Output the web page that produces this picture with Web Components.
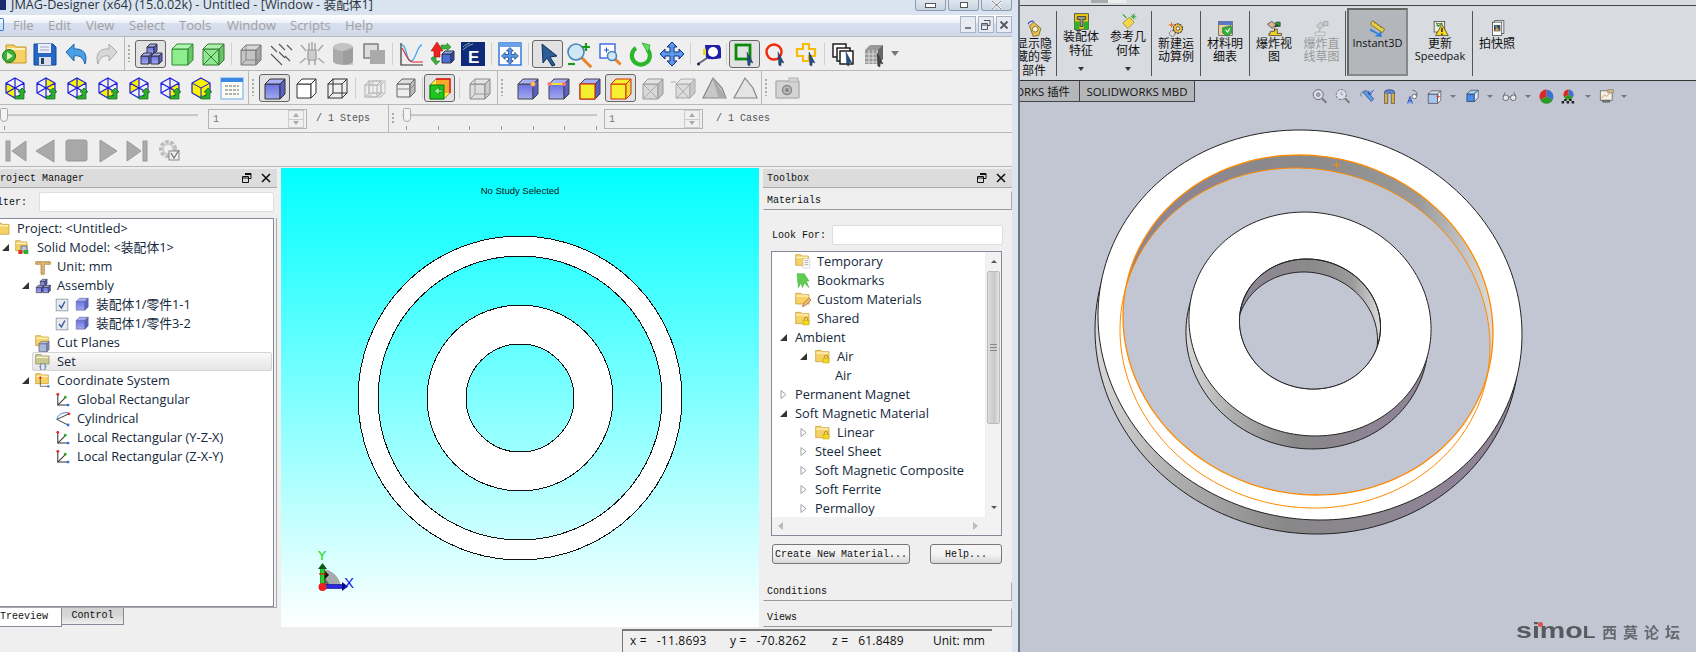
<!DOCTYPE html>
<html>
<head>
<meta charset="utf-8">
<style>
  html, body { margin: 0; padding: 0; width: 1696px; height: 652px; overflow: hidden; background: #c1c6d2; }
  body { display: flex; font-family: "Open Sans", "Noto Sans CJK SC", sans-serif; }
</style>
</head>
<body>
<jmag-window></jmag-window>
<sw-window></sw-window>

<script>
// ---------- icon drawing helpers (24x24 box) ----------
const box = (x, y, s, d, f, t, r, st = '#334', sw = 1) =>
  `<g stroke="${st}" stroke-width="${sw}" stroke-linejoin="round"><rect x="${x}" y="${y}" width="${s}" height="${s}" fill="${f}"/>` +
  `<path d="M${x} ${y}l${d} ${-d}h${s}l${-d} ${d}z" fill="${t}"/>` +
  `<path d="M${x + s} ${y}l${d} ${-d}v${s}l${-d} ${d}z" fill="${r}"/></g>`;
const wire = (x, y, s, d, st, sw = 1) =>
  `<g fill="none" stroke="${st}" stroke-width="${sw}"><rect x="${x}" y="${y}" width="${s}" height="${s}"/><rect x="${x + d}" y="${y - d}" width="${s}" height="${s}"/>` +
  `<path d="M${x} ${y}l${d} ${-d}M${x + s} ${y}l${d} ${-d}M${x} ${y + s}l${d} ${-d}M${x + s} ${y + s}l${d} ${-d}"/></g>`;
const folder = (x = 2, y = 4, w = 20, h = 16, c = '#f6d264', e = '#c2962c') =>
  `<path d="M${x} ${y}h${w * .4}l2 2h${w * .6 - 2}v${h - 2}h${-w}z" fill="${c}" stroke="${e}"/>` +
  `<path d="M${x + 1} ${y + 4}h${w - 2}" stroke="#fff3c4" stroke-width="2"/>`;
const lock = (x, y) =>
  `<path d="M${x + 2} ${y + 4}v-2a2.5 2.5 0 0 1 5 0v2" fill="none" stroke="#a88a20" stroke-width="1.3"/><rect x="${x}" y="${y + 4}" width="9" height="7" fill="#f4d81c" stroke="#b89a10" stroke-width=".7"/>`;
const cursor = (x = 14, y = 10, c = '#1f4e86') =>
  `<path d="M${x} ${y}l6 11-2.6-1-.6 4-2-1z" fill="${c}" stroke="#123" stroke-width=".4"/>`;
const hex = 'M12 2 21 7V17L12 22 3 17V7Z';
const greenArrow = '<path d="M13 21h5v-4h-2l4-4 4 4h-2v7h-9z" fill="#2dae2d" stroke="#0d6a14" stroke-width=".7" transform="translate(-1 -1)"/>';
const viewCube = p =>
  `${p ? `<path d="${p}" fill="#fbf300"/>` : ''}<path d="${hex}M3 7 12 12 21 7M12 12V22M12 2V12M3 17 12 12 21 17" fill="none" stroke="#1c1ce0" stroke-width="1.2"/>${greenArrow}`;
const magnifier = (x, y, r = 6) =>
  `<line x1="${x + r * .7}" y1="${y + r * .7}" x2="${x + r * 1.9}" y2="${y + r * 1.9}" stroke="#e8842c" stroke-width="3"/>` +
  `<circle cx="${x}" cy="${y}" r="${r}" fill="#cfe7f7" stroke="#4c86b4" stroke-width="1.6"/>`;
const coord = '<path d="M3 2V14H13" fill="none" stroke="#333" stroke-width="1.1"/><path d="M3 14 11 6" stroke="#333" stroke-width="1.1"/><circle cx="3" cy="2.5" r="1.5" fill="#e22"/><circle cx="11" cy="5.5" r="1.5" fill="#3a3"/><circle cx="14" cy="14" r="1.5" fill="#27d"/>';
const blueF = 'url(#b)';
const panPath = '<path d="M12 0l5 5h-3v5h5V7l5 5-5 5v-3h-5v5h3l-5 5-5-5h3v-5H5v3l-5-5 5-5v3h5V5H7z" fill="#5a9ae8" stroke="#0e2e88"/>';

const ICONS = {
  open: folder(4, 3, 20, 18) + '<circle cx="7" cy="14" r="6.5" fill="#3eae35" stroke="#1a7a1a"/><path d="M5 10l6 4-6 4z" fill="#d8f4c0"/>',
  save: '<path d="M1 2h19l3 3v18H1z" fill="#2467c4" stroke="#134a96"/><rect x="5" y="2" width="13" height="9" fill="#eef"/><path d="M7 5h9M7 8h9" stroke="#9ab"/><rect x="6" y="15" width="12" height="8" fill="#dde"/><rect x="8" y="16" width="3" height="6" fill="#245"/>',
  undo: '<path d="M2 10 10 2V7C20 6 24 13 21 22 19 15 15 13 10 14V19Z" fill="#4a9ee4" stroke="#1c62ac"/>',
  redo: '<path d="M22 10 14 2V7C4 6 0 13 3 22 5 15 9 13 14 14V19Z" fill="#d8d8d8" stroke="#aaa"/>',
  assembly: box(8, 5, 7, 3, blueF, '#a8aef0', '#5a62c0') + box(2, 14, 8, 3, blueF, '#a8aef0', '#5a62c0') + box(12, 14, 8, 3, blueF, '#a8aef0', '#5a62c0'),
  greenCube: box(2, 7, 16, 5, '#8eee8e', '#b2f4b2', '#68c868', '#2e8a2e'),
  greenWire: box(2, 7, 16, 5, '#90e890', '#b2f0b2', '#6cc06c', '#2e7a2e') + '<path d="M2 7l16 16M18 7 2 23" stroke="#2e7a2e"/>',
  grayWire: box(3, 8, 15, 5, '#c4c4c4', '#d8d8d8', '#a4a4a4', '#777') + '<path d="M8 3v15h15M8 18l-5 5" stroke="#888" fill="none"/>',
  arrows: '<g stroke="#555" stroke-width="1.1" fill="#555"><path d="M2 4l6 6M10 2l6 6M18 3l5 5M2 12l6 6M10 10l6 6M16 14l5 5M8 18l5 5"/></g>',
  field: '<g stroke="#aaa" stroke-width="1.6" fill="none"><path d="M8 8h8v10H8z" fill="#ccc"/><path d="M9 8V1M12 8V0M15 8V1M6 9 1 3M18 9 23 3M6 16 0 21M18 16 24 21M9 18v5M15 18v5"/></g>',
  cylinder: '<path d="M2 5v14c0 5 20 5 20 0V5z" fill="#aaa"/><ellipse cx="12" cy="5" rx="10" ry="4" fill="#c4c4c4"/><path d="M12 9v14h10V5z" fill="#888" opacity=".35"/>',
  squares: '<rect x="2" y="2" width="14" height="14" fill="#ddd" stroke="#777" stroke-width="1.4"/><rect x="8" y="8" width="15" height="14" fill="#aaa"/>',
  graph: '<path d="M2 1V23H24" fill="none" stroke="#333" stroke-width="1.2"/><path d="M3 3C8 3 7 19 12 19S18 3 23 3" fill="none" stroke="#49a8ec" stroke-width="1.3"/><path d="M3 6C8 14 9 20 14 20h10" fill="none" stroke="#d22" stroke-width="1.1"/>',
  chart: '<path d="M7 0 13 9H10V15H4V9H1Z" fill="#e22" stroke="#a11" stroke-width=".6"/>' + box(12, 12, 9, 3, '#4a70d8', '#8aa4ee', '#2a4ab0') + '<path d="M11 3h6v-2l4 4-4 4V7h-6zM2 15h4v4h4l-4 4-5-6z" fill="#3cae3c" stroke="#1a7a1a" stroke-width=".5"/>',
  e: '<rect width="24" height="24" fill="#0f2a78"/><path d="M2 8C5 5 8 3 12 2M2 5C4 3 6 2 9 1" stroke="#8aa" fill="none"/><text x="7" y="21" font-family="Liberation Sans,sans-serif" font-weight="700" font-size="17" fill="#fff">E</text>',
  viewport: `<rect x="1" y="1" width="22" height="22" fill="#fff" stroke="#2a6ee0" stroke-width="1.4"/><rect x="1" y="1" width="22" height="4" fill="#6aa2ea"/><g transform="translate(3.5 5.500) scale(.7)">${panPath}</g>`,
  pointer: '<path d="M6 2 21 14 14 15 19 23 16 24 11 16 7 21Z" fill="#2c5d94" stroke="#0f2e5c"/>',
  zoomPM: magnifier(9, 10, 8) + '<path d="M19 1v8M15 5h8" stroke="#1c9a1c" stroke-width="2.2"/><path d="M1 22h7" stroke="#1c9a1c" stroke-width="2.2"/>',
  zoomBox: '<rect x="2" y="2" width="15" height="14" fill="#fff" stroke="#1a4ee0" stroke-width="1.2"/><path d="M6 8h5M8.500 5.500v5" stroke="#1a4ee0"/>' + magnifier(14, 14, 4.5),
  rotate: '<path d="M7 6A9 9 0 1 0 18 7" fill="none" stroke="#2ab82a" stroke-width="4.200"/><path d="M13 1l8 2-2 8z" fill="#5ce05c" stroke="#1a8a1a" stroke-width=".6"/>',
  pan: panPath,
  tape: '<path d="M8 3h13c2 0 3 2 3 5v8c-2 1-13 2-15 0z" fill="#1f1fa8"/><circle cx="16" cy="10" r="5" fill="#fff"/><rect x="6" y="7" width="3" height="6" fill="#e8d820"/><path d="M10 16 1 22" stroke="#667" stroke-width="2"/><circle cx="1.500" cy="22" r="1.500" fill="#225"/>',
  selSquare: '<rect x="3" y="3" width="14" height="14" fill="none" stroke="#0a8a0a" stroke-width="2.800"/>' + cursor(),
  selCircle: '<circle cx="10" cy="10" r="7.500" fill="none" stroke="#f02a0a" stroke-width="2.400"/>' + cursor(),
  selPlus: '<path d="M8 2h6v5h6v7h-6v5H8v-5H2V7h6z" fill="none" stroke="#f6bc0a" stroke-width="2.200"/>' + cursor(),
  layers: '<rect x="2" y="2" width="13" height="13" fill="#fff" stroke="#111" stroke-width="1.400"/><rect x="6" y="6" width="13" height="13" fill="#fff" stroke="#111" stroke-width="1.400"/><rect x="9" y="9" width="13" height="13" fill="#fff" stroke="#111" stroke-width="1.400"/>' + cursor(15, 10),
  mesh: '<path d="M3 8l5-5h13v14l-5 5H3z" fill="#999"/><path d="M3 12h13M3 16h13M3 20h13M7 8v14M11 8v14M15 8v14" stroke="#ddd"/><path d="M16 8l5-5v14l-5 5z" fill="#666"/>' + cursor(15, 11, '#444'),
  v1: viewCube('M3 7 12 12V22L3 17Z'),
  v2: viewCube('M12 2 21 7V17L12 12Z'),
  v3: viewCube('M3 7 12 2 21 7 12 12Z'),
  v4: viewCube('M3 17 12 12 21 17 12 22Z'),
  v5: viewCube('M3 7 12 2V12L3 17Z'),
  v6: viewCube('M12 12 21 7V17L12 22Z'),
  v7: `<path d="${hex}" fill="#fbf300" stroke="#1c1ce0" stroke-width="1.200"/><path d="M3 7 12 12 21 7M12 12V22" stroke="#1c1ce0" fill="none"/>${greenArrow}`,
  table: '<rect x="1" y="2" width="22" height="21" fill="#fbfbf4" stroke="#8ec0f0" stroke-width="1.400"/><rect x="1" y="2" width="22" height="4" fill="#3a8ae4"/><path d="M5 10h14M5 14h14M5 18h14" stroke="#999" stroke-width="1.500" stroke-dasharray="3 1"/>',
  solid: box(2, 8, 15, 5, blueF, '#aab0f4', '#5860c4', '#333'),
  wireOut: box(3, 8, 14, 5, '#fff', '#fff', '#fff', '#333'),
  wireAll: wire(3, 8, 14, 5, '#333'),
  ghost: '<g opacity=".55">' + wire(3, 9, 12, 4, '#777') + wire(7, 9, 12, 4, '#999') + '</g>',
  ghostBox: box(4, 8, 13, 5, '#eee', '#ddd', '#bbb', '#666') + '<path d="M4 13h13l5-5" stroke="#888" fill="none"/>',
  pickFace: '<path d="M8 3H22V17L16 23H2V9Z" fill="#fdf030" stroke="#888"/><path d="M8 3H22V17H8Z" fill="#f22" opacity=".35"/><path d="M2 9H16V23H2Z" fill="#1fc41f" stroke="#0a7a0a"/><path d="M8 3H22V17" fill="none" stroke="#e01010" stroke-width="1.300"/><path d="M15 14h-4v-3l-5 4 5 4v-3h4z" fill="#8ff08f" stroke="#0a7a0a" stroke-width=".6"/>',
  grayWire2: box(3, 8, 15, 5, '#ddd', '#e4e4e4', '#ccc', '#888') + '<path d="M8 3v15h15M8 18l-5 5" stroke="#999" fill="none"/>',
  cubeV: box(2, 8, 15, 5, blueF, '#aab0f4', '#5860c4', '#444') + '<circle cx="17" cy="8" r="2.200" fill="#f4e030" stroke="#e88"/>',
  cubeE: box(2, 8, 15, 5, blueF, '#aab0f4', '#5860c4', '#444') + '<path d="M3 8h14" stroke="#f4e030" stroke-width="2"/><circle cx="2.500" cy="8" r="2" fill="#f77"/><circle cx="17" cy="8" r="2" fill="#f77"/>',
  cubeF: box(2, 8, 15, 5, blueF, '#aab0f4', '#5860c4', '#444') + '<rect x="2" y="8" width="15" height="15" fill="#f4ee30" stroke="#d82a0a" stroke-width="1.200"/>',
  cubeY: box(2, 8, 15, 5, '#f6f030', '#f6f030', '#e8e030', '#d82a0a'),
  grayX: box(3, 8, 15, 5, '#d8d8d8', '#e2e2e2', '#c0c0c0', '#999') + '<path d="M3 8l15 15M18 8 3 23" stroke="#aaa"/>',
  grayX2: box(5, 8, 14, 5, '#dcdcdc', '#e6e6e6', '#c8c8c8', '#aaa') + '<path d="M5 8l14 15M19 8 5 23M0 6h5" stroke="#aaa"/>',
  prism: '<path d="M11 2 1 22H24L20 12Z" fill="#c8c8c8" stroke="#888" stroke-width="1.200"/><path d="M11 2 17 22" stroke="#aaa"/><path d="M11 2 24 22H17Z" fill="#aaa"/>',
  prism2: '<path d="M12 2 1 22H24L20 12Z" fill="#e4e4e4" stroke="#888" stroke-width="1.200"/><path d="M12 2 20 12" stroke="#999"/>',
  camera: '<rect x="1" y="5" width="23" height="17" rx="1" fill="#d4d4d4" stroke="#b4b4b4" stroke-width="1.600"/><rect x="14" y="2" width="9" height="4" fill="#d4d4d4" stroke="#b4b4b4"/><circle cx="12" cy="14" r="4.500" fill="#bbb" stroke="#888" stroke-width="1.400"/><circle cx="12" cy="14" r="2" fill="#888"/>',
  first: '<rect x="4" y="3" width="4" height="20" fill="#aaa" stroke="#999"/><path d="M10 13 24 3V23Z" fill="#aaa" stroke="#999"/>',
  prev: '<path d="M3 13 21 2V24Z" fill="#aaa" stroke="#999"/>',
  stop: '<rect x="2" y="2" width="21" height="21" rx="2" fill="#a8a8a8" stroke="#999"/>',
  play: '<path d="M5 2 22 13 5 24Z" fill="#aaa" stroke="#999"/>',
  last: '<rect x="17" y="3" width="4" height="20" fill="#aaa" stroke="#999"/><path d="M1 3 15 13 1 23Z" fill="#aaa" stroke="#999"/>',
  gear: '<circle cx="11" cy="11" r="7" fill="none" stroke="#bbb" stroke-width="4" stroke-dasharray="3.500 1.500"/><circle cx="11" cy="11" r="5" fill="none" stroke="#ccc" stroke-width="2"/><rect x="12" y="13" width="10" height="9" fill="#eee" stroke="#888"/><path d="M14 15l3 5 5-8" fill="none" stroke="#777" stroke-width="1.300"/>',
  // tree
  tFolder: folder(1, 3, 20, 17),
  tSolid: folder(1, 1, 17, 15) + '<rect x="9" y="9" width="9" height="9" fill="#b8c8d8" stroke="#445"/><rect x="5" y="15" width="6" height="6" fill="#d32"/><rect x="13" y="15" width="7" height="6" fill="#3a3"/>',
  tRuler: '<path d="M1 4H23V8H14V23H9V8H1Z" fill="#e0b878" stroke="#a87a34"/><path d="M4 4v2M8 4v2M16 4v2M20 4v2M9 12h2M9 16h2M9 20h2" stroke="#a87a34"/>',
  tCheck: '<rect x="2" y="2" width="20" height="20" fill="#e8eaf0" stroke="#8f9aa8" stroke-width="1.500"/><path d="M7 12 11 17 17 6" fill="none" stroke="#3c5a9c" stroke-width="2.400"/>',
  tCube: box(2, 7, 14, 5, blueF, '#a8aef0', '#5a62c0', '#5560a0'),
  tCut: folder(1, 1, 19, 15) + box(6, 13, 12, 3, '#a8b8d8', '#c8d4e8', '#8898b8', '#557'),
  tSet: folder(1, 1, 20, 14, '#c8c890', '#8a8a50') + '<text x="5" y="23" font-family="DejaVu Sans Mono,monospace" font-size="11" fill="#1a5ab0">{}</text>',
  tCoordF: folder(1, 1, 19, 15) + '<path d="M8 7V20H20" fill="none" stroke="#333"/><circle cx="8" cy="7" r="1.800" fill="#e22"/><circle cx="20" cy="20" r="1.800" fill="#27d"/>',
  tCoord: '<g transform="scale(1.400)">' + coord + '</g>',
  tCyl: '<g transform="scale(1.400)"><path d="M15 3 2 9 14 15" fill="none" stroke="#333"/><path d="M2 9C3 4 8 1 14 2" fill="none" stroke="#27d"/><circle cx="15" cy="3" r="1.500" fill="#e22"/><circle cx="14" cy="15" r="1.500" fill="#27d"/></g>',
  tTemp: folder(1, 1, 19, 16) + '<rect x="12" y="7" width="10" height="14" fill="#fff" stroke="#999" stroke-dasharray="1 1"/><path d="M14 10h6M14 13h6M14 16h6" stroke="#888"/>',
  tMark: '<path d="M3 1 14 1 21 12 17 12 21 22 14 15 11 22 9 15 5 22Z" fill="#5ece4e" stroke="#2a9a2a" stroke-width=".6"/>',
  tPencil: folder(1, 2, 20, 16) + '<path d="M11 22l2-5 8-8 3 3-8 8z" fill="#f0b878" stroke="#a86020"/>',
  tLock: folder(1, 2, 20, 17) + lock(12, 10),
  // solidworks ribbon
  sHide: '<path d="M5 8l6-5 10 9-3 10-8 1z" fill="#e8c050" stroke="#665010"/><circle cx="13" cy="13" r="4" fill="#fff6c8" stroke="#553"/><path d="M3 6c1-4 5-5 8-4" stroke="#2a4ad0" fill="none" stroke-width="1.500"/>',
  sFeature: '<rect x="2" y="1" width="20" height="22" fill="#e8c818" stroke="#333"/><rect x="2" y="12" width="7" height="11" fill="#2fb02f"/><rect x="15" y="12" width="7" height="11" fill="#2fb02f"/><path d="M6 5h12v4h-4v10h-4V9H6z" fill="#999" stroke="#222"/>',
  sRef: '<path d="M4 14 13 6 20 13 11 22Z" fill="#f0d850" stroke="#998010"/><path d="M4 2l5 5" stroke="#2aa02a" stroke-width="1.500"/><path d="M19 1v8M15 5h8M16 2l6 6M22 2l-6 6" stroke="#2aa02a"/>',
  sMotion: '<circle cx="14" cy="12" r="6.500" fill="#f0c040" stroke="#333" stroke-dasharray="3 1" stroke-width="1.500"/><circle cx="14" cy="12" r="2.500" fill="#fff" stroke="#333"/><circle cx="6" cy="19" r="4" fill="#ddd" stroke="#333" stroke-dasharray="2 1"/><path d="M5 2l1 4 4 1-4 1-1 4-1-4-4-1 4-1z" fill="#e86a1a"/>',
  sBom: '<rect x="2" y="2" width="20" height="20" fill="#e8d090" stroke="#555"/><rect x="2" y="2" width="20" height="5" fill="#5a76c8"/><path d="M8 11 20 8 21 18 14 23 8 18z" fill="#3ab03a" stroke="#175"/><path d="M12 14l3 3 3-5" stroke="#fff" fill="none" stroke-width="1.500"/>',
  sExplode: '<path d="M2 6 8 2 14 6 9 12Z" fill="#d8b890" stroke="#333"/><path d="M14 3h6v6h-6z" fill="#2aa02a" stroke="#333"/><path d="M12 12v4M12 10l5-3" stroke="#222" stroke-width="1.500"/><path d="M6 16h6v-3h4v6h6v3H4v-3h2z" fill="#f0d020" stroke="#333"/>',
  sExplodeG: '<path d="M5 8 11 3 15 8 10 13Z" fill="#ccc" stroke="#999"/><path d="M15 2h6v6h-6z" fill="#ccc" stroke="#999"/><path d="M10 13l-2 5" stroke="#aaa" stroke-width="1.500"/><path d="M3 17h14v5H3z" fill="#ddd" stroke="#aaa"/>',
  s3d: '<path d="M5 1 22 13 19 18 2 6Z" fill="#e8d040" stroke="#665810"/><path d="M8 5l1-2M12 8l1-2M16 11l1-2" stroke="#554"/><path d="M2 12 14 19 17 15 18 24 8 23 12 20 1 15Z" fill="#2a7ee0"/>',
  sUpdate: '<rect x="3" y="2" width="15" height="15" fill="#f4f0e0" stroke="#333"/><path d="M6 5h9M6 8h5" stroke="#555"/><path d="M6 4l3 5 5-5" stroke="#2aa02a" fill="none" stroke-width="1.500"/><path d="M14 6 23 22H5Z" fill="#f8d820" stroke="#333"/><path d="M14 11v6M14 19v2" stroke="#222" stroke-width="2"/>',
  sSnap: '<rect x="8" y="1" width="13" height="18" fill="#fff" stroke="#333"/><rect x="5" y="3" width="13" height="19" fill="#fff" stroke="#333"/><rect x="7" y="7" width="9" height="9" fill="#3a4a6a"/><path d="M8 15l3-5 4 5z" fill="#e8a030"/><circle cx="10" cy="9" r="1.200" fill="#5bc85b"/>',
  // solidworks heads-up bar
  hZoom: '<circle cx="10" cy="9" r="8" fill="#dde" stroke="#666" stroke-width="1.500"/><circle cx="10" cy="9" r="3" fill="#aab" stroke="#666"/><path d="M16 15l7 7" stroke="#777" stroke-width="3"/>',
  hZoomA: '<circle cx="10" cy="9" r="8" fill="#dde" stroke="#666" stroke-width="1.500" stroke-dasharray="4 2"/><path d="M10 5v4h3" stroke="#666" fill="none"/><path d="M16 15l7 7" stroke="#777" stroke-width="3"/>',
  hPrev: '<path d="M5 6 18 20 22 16 10 2Z" fill="#5a9ae4" stroke="#2a4a80"/><path d="M2 12c-2-5 1-8 6-9" stroke="#2a4a80" fill="none"/><path d="M14 8 22 2M14 8h5M14 8v-5" stroke="#1a3ac0" fill="none" stroke-width="1.400"/>',
  hSection: '<path d="M4 5c0-5 16-5 16 0v18h-5V8c0-2-6-2-6 0v15H4z" fill="#5a8ae0" stroke="#224"/><path d="M4 6v17h5V8zM15 6v17h5V8z" fill="#d8b040" stroke="#665" stroke-width=".8"/>',
  hOrient: '<path d="M12 2c5 0 8 4 7 8l-3-1" fill="none" stroke="#333"/><circle cx="15" cy="12" r="3.500" fill="#fff" stroke="#333"/><path d="M4 23 8 12 12 23M5.500 19h5" fill="#8aa8e8" stroke="#2a4ac0" stroke-width="1.400"/>',
  hView: box(2, 8, 15, 5, '#a8c4ec', '#d4e2f4', '#fff', '#333') + '<path d="M15 12h6M18 9v6" stroke="#d22"/>',
  hDisplay: box(3, 8, 12, 6, '#4a8ae8', '#a4ccf4', '#dceafa', '#234'),
  hGlasses: '<circle cx="6" cy="14" r="4.500" fill="#e8e8f0" stroke="#555" stroke-width="1.300"/><circle cx="18" cy="14" r="4.500" fill="#e8e8f0" stroke="#555" stroke-width="1.300"/><path d="M10 13c1-1 3-1 4 0M2 12 5 5M22 12 19 5" stroke="#555" fill="none"/>',
  hBall: '<circle cx="12" cy="12" r="11" fill="#e8c020"/><path d="M12 12V1A11 11 0 0 0 2 17Z" fill="#d82a2a"/><path d="M12 12 2 17A11 11 0 0 0 22 17Z" fill="#2a9a2a"/><path d="M12 12 22 17A11 11 0 0 0 23 12 11 11 0 0 0 12 1Z" fill="#3a70d8"/>',
  hScene: '<circle cx="12" cy="9" r="8" fill="#e8c020"/><path d="M12 9V1A8 8 0 0 0 5 13Z" fill="#d82a2a"/><path d="M12 9 5 13A8 8 0 0 0 19 13Z" fill="#2a9a2a"/><path d="M12 9 19 13A8 8 0 0 0 12 1Z" fill="#3a70d8"/><path d="M1 19h4v4H1zM9 19h4v4H9zM17 19h4v4h-4zM5 16h4v3H5zM13 16h4v3h-4z" fill="#222"/>',
  hDisplay2: '<rect x="2" y="3" width="19" height="15" fill="#f4f0e4" stroke="#444"/><path d="M4 15 9 9l3 3 5-5" stroke="#c06a30" fill="none"/><path d="M6 18h11v3H6z" fill="#888" stroke="#444"/><path d="M14 1h9v5h-9z" fill="#d8b890" stroke="#875"/>'
};
const DEFS = '<defs><linearGradient id="b" x1="0" y1="0" x2="0" y2="1"><stop offset="0" stop-color="#6a72e0"/><stop offset="1" stop-color="#a4a8f0"/></linearGradient></defs>';

// ---------- base class ----------
class Comp extends HTMLElement {
  connectedCallback() {
    if (this.shadowRoot) return;
    this.attachShadow({ mode: 'open' });
    this.shadowRoot.innerHTML = `<style>${this.css()}</style>${this.html()}`;
  }
  css() { return ':host{display:block}'; }
  html() { return '<slot></slot>'; }
  at(n, d = '') { return this.hasAttribute(n) ? this.getAttribute(n) : d; }
}
const def = (tag, css, html) => customElements.define(tag, class extends Comp {
  css() { return css; }
  html() { return html(this); }
});

const MONO = '"Liberation Mono", monospace';
const UI = '"Open Sans", "Noto Sans CJK SC", sans-serif';

def('x-icon', ':host{display:inline-flex;flex:none}svg{display:block;overflow:visible}', e => {
  const s = e.at('size', 24);
  return `<svg width="${s}" height="${s}" viewBox="0 0 24 24">${DEFS}${ICONS[e.at('name')] || ''}</svg>`;
});

// toolbars
def('tool-row', `:host{display:flex;align-items:stretch;height:33px;border-bottom:1px solid #b8b8b8;box-sizing:content-box;overflow:hidden}`, () => '<slot></slot>');
def('tool-btn', `:host{display:flex;flex:none;width:31px;align-items:center;justify-content:center;box-sizing:border-box;margin:3px 0 2px}
  :host([on]){background:#e2e2e2;border:1px solid #666;border-radius:3px}`, e => `<x-icon name="${e.at('name')}"></x-icon>`);
def('tool-sep', `:host{display:flex;flex:none;justify-content:center;margin:6px 0 5px}i{width:1px;background:#d0d0d0}`,
  e => { e.style.width = e.at('w', 6) + 'px'; return '<i></i>'; });
def('tool-section', `:host{display:flex;flex:none;gap:3px}
  .l{width:1px;background:#b8b8b8}
  .g{width:2px;margin:8px 0;background:repeating-linear-gradient(#aaa 0 2px,transparent 2px 4px)}`,
  e => { e.style.width = e.at('w', 13) + 'px'; return '<div class="l" style="margin-left:' + e.at('l', 2) + 'px"></div><div class="g"></div>'; });

def('step-slider', `:host{display:block;flex:none;height:27px;position:relative}
  .t{height:2px;margin-top:9px;background:#c8c8c8;border-bottom:1px solid #e8e8e8}
  .k{position:absolute;top:3px;left:var(--k,0);width:8px;height:14px;background:#f4f4f4;border:1px solid #aaa;border-radius:2px 2px 5px 5px;box-sizing:border-box}
  .m{display:flex;justify-content:space-between;padding:9px 0 0;margin:0 var(--m,0) 0 var(--k2,4px)}
  .m i{width:1px;height:4px;background:#999}`,
  e => `<div class="t"></div><div class="k"></div><div class="m">${'<i></i>'.repeat(+e.at('ticks', 1))}${+e.at('ticks', 1) === 1 ? '<span></span>' : ''}</div>`);

def('spin-box', `:host{display:flex;flex:none;box-sizing:border-box;width:99px;height:20px;margin-top:4px;border:1px solid #b4b4b4;background:#f0f0f0;font:10px ${MONO};color:#777;align-items:center;padding-left:4px;justify-content:space-between}
  .a{display:flex;flex-direction:column;width:14px;height:16px;margin-right:2px;border:1px solid #ccc;font-size:0}
  .a i{flex:1;display:flex;align-items:center;justify-content:center}
  .a i:after{content:"";border:3px solid transparent}
  .a i:first-child:after{border-bottom:4px solid #aaa;border-top:0}
  .a i:last-child{border-top:1px solid #ccc}
  .a i:last-child:after{border-top:4px solid #aaa;border-bottom:0}`, () => '<span><slot></slot></span><div class="a"><i></i><i></i></div>');

// tree
def('tree-row', `:host{display:flex;align-items:center;height:19px;white-space:nowrap;font:12.800px/19px ${UI};color:#14283c;box-sizing:border-box}
  :host([sel]){background:linear-gradient(#fafafa,#e4e4e4);outline:1px solid #d4d4d4;outline-offset:-1px;border-radius:2px}
  .a{flex:none;display:flex;align-items:center;justify-content:center;width:var(--aw,20px)}
  .a svg{display:block}
  .i{flex:none;display:flex;align-items:center}`,
  e => {
    const ar = e.at('arrow');
    const mark = ar === 'o'
      ? '<svg width="7" height="7"><path d="M7 0V7H0Z" fill="#333"/></svg>'
      : ar === 'c' ? '<svg width="7" height="9"><path d="M1 .5 6 4.500 1 8.500Z" fill="#fff" stroke="#a0a0a0"/></svg>' : '';
    const icons = e.at('icons').split(',').filter(Boolean).map(s => {
      const [n, w = 22, sz = 16] = s.split(':');
      return `<span class="i" style="width:${w}px"><x-icon name="${n}" size="${sz}"></x-icon></span>`;
    }).join('');
    return `<span class="a" style="margin-left:${e.at('pad', 0)}px">${mark}</span>${icons}<span><slot></slot></span>`;
  });

// small panel pieces
def('panel-head', `:host{display:flex;align-items:center;justify-content:space-between;height:19px;box-sizing:border-box;background:#dcdcdc;border-bottom:1px solid #aaa;font:10px ${MONO};color:#111;padding:0 6px 0 4px;white-space:nowrap}
  .w{display:flex;gap:9px;align-items:center}`,
  () => `<span><slot></slot></span><span class="w"><svg width="10" height="10"><path d="M3 .5h6v5H7M.5 3.500h6v6h-6zM.5 5h6M3 1.500h6" fill="none" stroke="#111"/></svg><svg width="10" height="10"><path d="M1 1l8 8M9 1 1 9" stroke="#111" stroke-width="1.600"/></svg></span>`);
def('sect-bar', `:host{display:block;box-sizing:border-box;height:19px;background:#efefef;border:1px solid #eee;border-bottom:1px solid #999;border-right:1px solid #aaa;font:10px/17px ${MONO};color:#111;padding-left:3px}`, () => '<slot></slot>');
def('push-btn', `:host{display:flex;flex:none;box-sizing:border-box;height:20px;align-items:center;justify-content:center;border:1px solid #777;border-radius:3px;background:linear-gradient(#f4f4f4 50%,#d8d8d8);font:10px ${MONO};color:#111;white-space:nowrap}`, () => '<slot></slot>');
def('text-field', `:host{display:block;flex:none;box-sizing:border-box;height:20px;background:#fff;border:1px solid #ddd;border-radius:2px}`, () => '');

// viewport
def('model-view', `:host{display:flex;flex:1;align-items:center;justify-content:center;position:relative;background:linear-gradient(#00ffff,#fff);overflow:hidden;margin-top:1px}
  .cap{position:absolute;top:17px;left:0;right:0;text-align:center;font:9.500px/12px "Liberation Sans",sans-serif;color:#111}
  .axis{position:absolute;left:30px;bottom:28px}`,
  () => {
    const c = r => `M${162 - r} 162a${r} ${r} 0 1 0 ${2 * r} 0a${r} ${r} 0 1 0 ${-2 * r} 0z`;
    return `<div class="cap">No Study Selected</div>
    <svg width="324" height="324" viewBox="0 0 324 324" style="overflow:visible" shape-rendering="crispEdges">
      <path d="${c(162)}${c(142)}" fill="#fff" fill-rule="evenodd" stroke="#111"/>
      <path d="${c(93)}${c(54)}" fill="#fff" fill-rule="evenodd" stroke="#111"/>
    </svg>
    <svg class="axis" width="44" height="48" viewBox="0 0 44 48">
      <path d="M11 36 V18 A20 20 0 0 1 30 36Z" fill="#a6acac"/>
      <path d="M11 36 V22 L20 36Z" fill="#666"/>
      <path d="M14 20 18 24 12 30Z" fill="#111"/>
      <rect x="9.500" y="17" width="4" height="18" fill="#22d622" stroke="#0a600a" stroke-width=".6"/>
      <path d="M7 18 11.500 12 16 18Z" fill="#0a5a1a"/>
      <rect x="12" y="33.500" width="20" height="4" fill="#2a2ae0" stroke="#0a0a80" stroke-width=".6"/>
      <path d="M31 31 37 35.500 31 40Z" fill="#0a0a80"/>
      <circle cx="11.500" cy="36" r="4" fill="#ee2020"/>
      <path d="M8 23h7" stroke="#e00" stroke-width="1.100"/>
      <text x="6" y="9" font-family="Liberation Sans,sans-serif" font-size="15" fill="#1ce01c">Y</text>
      <text x="33" y="37" font-family="Liberation Sans,sans-serif" font-size="15" fill="#1414e8">X</text>
    </svg>`;
  });

// ---------- JMAG side ----------
def('project-panel', `:host{display:flex;flex:none;flex-direction:column;width:277px;overflow:hidden;margin-top:2px}
  .flt{display:flex;align-items:center;height:30px;flex:none;padding-bottom:2px;box-sizing:border-box;font:10px ${MONO};color:#111}
  .flt span{width:39px;margin-left:-15px;flex:none}
  text-field{width:235px;margin-left:15px}
  .out{flex:1;border:1px solid #aaa;border-left:0;border-top:0;padding-right:2px;display:flex;min-height:0}
  .tree{flex:1;box-sizing:border-box;background:#fff;border:1px solid #889;border-left:0;overflow:hidden}
  .tabs{display:flex;height:19px;flex:none;align-items:flex-start}
  .t1{width:62px;height:19px;box-sizing:border-box;background:#fff;border:1px solid #889;border-top:0;border-left:0;font:10px/18px ${MONO};color:#111}
  .t2{width:62px;height:17px;box-sizing:border-box;background:linear-gradient(#d4d4d4 40%,#efefef);border:1px solid #889;border-left:0;border-top:0;font:10px/15px ${MONO};color:#111;text-align:center}`,
  () => `
  <panel-head><span style="margin-left:-10px">Project Manager</span></panel-head>
  <div class="flt"><span>Filter:</span><text-field></text-field></div>
  <div class="out"><div class="tree" style="--aw:20px">
    <tree-row pad="-25" icons="tFolder">Project: &lt;Untitled&gt;</tree-row>
    <tree-row pad="-5" arrow="o" icons="tSolid">Solid Model: &lt;装配体1&gt;</tree-row>
    <tree-row pad="15" icons="tRuler">Unit: mm</tree-row>
    <tree-row pad="15" arrow="o" icons="assembly">Assembly</tree-row>
    <tree-row pad="35" icons="tCheck:20:14,tCube:21:15">装配体1/零件1-1</tree-row>
    <tree-row pad="35" icons="tCheck:20:14,tCube:21:15">装配体1/零件3-2</tree-row>
    <tree-row pad="15" icons="tCut">Cut Planes</tree-row>
    <tree-row pad="-17" icons="tSet" sel style="margin-left:32px;margin-right:1px">Set</tree-row>
    <tree-row pad="15" arrow="o" icons="tCoordF">Coordinate System</tree-row>
    <tree-row pad="35" icons="tCoord">Global Rectangular</tree-row>
    <tree-row pad="35" icons="tCyl">Cylindrical</tree-row>
    <tree-row pad="35" icons="tCoord">Local Rectangular (Y-Z-X)</tree-row>
    <tree-row pad="35" icons="tCoord">Local Rectangular (Z-X-Y)</tree-row>
  </div></div>
  <div class="tabs"><div class="t1">Treeview</div><div class="t2">Control</div></div>`);

def('scroll-v', `:host{display:flex;flex:none;flex-direction:column;align-items:center;width:15px;background:#f2f2f2;border-left:1px solid #eee;margin-left:auto}
  .u,.d{height:19px;display:flex;align-items:center;justify-content:center}
  .u:after{content:"";border:3px solid transparent;border-bottom:3px solid #555;border-top:0}
  .d:after{content:"";border:3px solid transparent;border-top:3px solid #555;border-bottom:0}
  .th{width:13px;height:153px;background:linear-gradient(90deg,#ddd,#c8c8c8 60%,#e4e4e4);border:1px solid #bbb;border-radius:2px;box-sizing:border-box;display:flex;align-items:center;justify-content:center}
  .th:after{content:"";width:7px;height:5px;border-top:1px solid #888;border-bottom:1px solid #888;background:linear-gradient(transparent 40%,#888 40% 60%,transparent 60%)}
  .sp{flex:1}`, () => '<div class="u"></div><div class="th"></div><div class="sp"></div><div class="d"></div>');

def('toolbox-panel', `:host{display:flex;flex:none;flex-direction:column;width:249px;overflow:hidden;margin-top:2px}
  sect-bar.m{margin-top:3px;margin-bottom:15px}
  .look{display:flex;align-items:center;font:10px ${MONO};color:#111;padding-left:9px;height:20px;flex:none}
  .look text-field{width:171px;margin-left:6px}
  .box{flex:none;margin:6px 10px 0 8px;height:285px;box-sizing:border-box;border:1px solid #889;background:#fff;display:flex;flex-direction:column}
  .top{display:flex;flex:1;min-height:0;overflow:hidden}
  .rows{flex:1;--aw:23px;overflow:hidden}
  .h{height:18px;flex:none;background:#f2f2f2;display:flex;align-items:center;justify-content:space-between;padding:0 23px 0 6px}
  .h i{border:4px solid transparent}
  .h i:first-child{border-right:5px solid #bbb;border-left:0}
  .h i:last-child{border-left:5px solid #bbb;border-right:0}
  .btns{display:flex;justify-content:space-between;margin:8px 10px 0 9px}
  .sp{flex:1}`,
  () => `
  <panel-head>Toolbox</panel-head>
  <sect-bar class="m">Materials</sect-bar>
  <div class="look"><span>Look For:</span><text-field></text-field></div>
  <div class="box"><div class="top"><div class="rows">
    <tree-row icons="tTemp">Temporary</tree-row>
    <tree-row icons="tMark">Bookmarks</tree-row>
    <tree-row icons="tPencil">Custom Materials</tree-row>
    <tree-row icons="tLock">Shared</tree-row>
    <tree-row arrow="o" icons="">Ambient</tree-row>
    <tree-row pad="20" arrow="o" icons="tLock">Air</tree-row>
    <tree-row pad="40" icons="">Air</tree-row>
    <tree-row arrow="c" icons="">Permanent Magnet</tree-row>
    <tree-row arrow="o" icons="">Soft Magnetic Material</tree-row>
    <tree-row pad="20" arrow="c" icons="tLock">Linear</tree-row>
    <tree-row pad="20" arrow="c" icons="">Steel Sheet</tree-row>
    <tree-row pad="20" arrow="c" icons="">Soft Magnetic Composite</tree-row>
    <tree-row pad="20" arrow="c" icons="">Soft Ferrite</tree-row>
    <tree-row pad="20" arrow="c" icons="">Permalloy</tree-row>
  </div><scroll-v></scroll-v></div><div class="h"><i></i><i></i></div></div>
  <div class="btns"><push-btn style="width:138px">Create New Material...</push-btn><push-btn style="width:72px">Help...</push-btn></div>
  <div class="sp"></div>
  <sect-bar style="margin-bottom:7px">Conditions</sect-bar>
  <sect-bar>Views</sect-bar>`);

def('status-line', `:host{display:flex;height:25px;flex:none;justify-content:flex-end;padding-top:2px;box-sizing:border-box;background:#efefef}
  .b{display:grid;grid-template-columns:100px 102px 101px 1fr;width:370px;box-sizing:border-box;border-top:2px solid #777;border-left:1px solid #777;padding-left:7px;font:12px/19px ${UI};color:#111;white-space:pre}
  .b span:not(:last-child){letter-spacing:.2px}
  .g{width:20px;flex:none}`,
  () => `<div class="b"><span>x =   -11.8693</span><span>y =   -70.8262</span><span>z =   61.8489</span><span>Unit: mm</span></div><div class="g"></div>`);

def('title-bar', `:host{display:flex;height:15px;flex:none;background:#d9e4f0;align-items:flex-start;justify-content:space-between;overflow:hidden;font:12.700px/8px ${UI};color:#2c3440;white-space:nowrap}
  .t{padding-left:11px}
  .app{position:absolute;left:-4px;top:0;width:10px;height:10px;background:#1a2a6a}
  .c{display:flex;gap:2px;padding-right:8px;margin-right:-2px}
  .c i{display:flex;align-items:center;justify-content:center;width:29px;height:10px;border:1px solid #8d9bac;border-top:0;border-radius:0 0 3px 3px;background:linear-gradient(#e0e6ee,#c8d4e2)}
  .c b{display:block;box-sizing:border-box;width:11px;height:5px;border:1px solid #555;background:#fff}`,
  () => `<div class="app"></div><div class="t">JMAG-Designer (x64) (15.0.02k) - Untitled - [Window - 装配体1]</div>
  <div class="c"><i><b></b></i><i><b style="width:8px;height:6px"></b></i><i><svg width="12" height="8"><path d="M1 0l9 8M10 0 1 8" stroke="#fff" stroke-width="2.400"/><path d="M1 0l9 8M10 0 1 8" stroke="#555" stroke-width=".8"/></svg></i></div>`);

def('menu-bar', `:host{display:flex;height:22px;flex:none;box-sizing:border-box;border-bottom:1px solid #b4b8c0;background:linear-gradient(#fff,#eef1f7 36%,#d8dfee 40%,#d2d9e9);font:13px/20px ${UI};color:#a0a0a0;position:relative}
  span{flex:none}
  .m{position:absolute;right:0;top:1px;display:flex;gap:2px}
  .m i{display:flex;align-items:center;justify-content:center;box-sizing:border-box;width:16px;height:17px;background:#e8ecf2;border:1px solid #a6b4c4}
  .ic{width:4px;height:13px;margin:3px 9px 0 0;border:1px solid #2a7ae0;border-left:0;border-radius:0 2px 2px 0;box-sizing:border-box}`,
  () => {
    const items = [['File', 35], ['Edit', 38], ['View', 43], ['Select', 50], ['Tools', 48], ['Window', 63], ['Scripts', 55], ['Help', 40]];
    return `<div class="ic"></div>${items.map(([t, w]) => `<span style="width:${w}px">${t}</span>`).join('')}
    <div class="m"><i><svg width="8" height="8"><path d="M1 7h6" stroke="#556" stroke-width="1.500"/></svg></i><i><svg width="10" height="10"><path d="M3 .5h6v5H7M.5 3.500h6v6h-6zM.5 5h6" fill="none" stroke="#556"/></svg></i><i><svg width="10" height="10"><path d="M1.500 1.500l7 7M8.500 1.500l-7 7" stroke="#556" stroke-width="1.800"/></svg></i></div>`;
  });

const btns = (list) => list.map(x => {
  if (x === '|') return '<tool-sep></tool-sep>';
  if (typeof x === 'number') return `<tool-sep w="${x}"></tool-sep>`;
  if (Array.isArray(x)) return `<tool-section w="${x[0]}" l="${x[1]}"></tool-section>`;
  const on = x.endsWith('*');
  return `<tool-btn name="${x.replace('*', '')}"${on ? ' on' : ''}></tool-btn>`;
}).join('');

def('jmag-window', `:host{display:flex;flex:none;flex-direction:column;width:1018px;height:652px;background:#dbe5f1;overflow:hidden;position:relative;box-sizing:border-box}
  .body{display:flex;flex-direction:column;flex:1;min-height:0;width:1012px;background:#efefef}
  .r1{margin-left:-2px}
  .r2{margin-left:-1px}
  .r3{height:28px;flex:none;box-sizing:border-box;display:flex;border-bottom:1px solid #b8b8b8;font:10px ${MONO};color:#555;white-space:pre}
  .r3 .lb{margin-top:8px;flex:none}
  .r4{height:34px;flex:none;box-sizing:border-box;display:flex;border-bottom:1px solid #b8b8b8;margin-left:-2px}
  .main{display:flex;flex:1;min-height:0;gap:4px}
  .caret{display:flex;align-items:center;margin-left:2px}
  .caret i{border:4px solid transparent;border-top:5px solid #777;border-bottom:0}`,
  () => `
  <title-bar></title-bar>
  <div class="body">
    <menu-bar></menu-bar>
    <tool-row class="r1">${btns(['open', 'save', 'undo', 'redo', [13, 2], 'assembly*', 'greenCube', 'greenWire', '|', 'grayWire', 'arrows', 'field', 'cylinder', 'squares', '|', 'graph', 'chart', 'e', '|', 'viewport', 7, 'pointer*', 'zoomPM', 'zoomBox', 'rotate', 'pan', '|', 'tape', 5, 'selSquare*', 'selCircle', 'selPlus', 5, 'layers', 'mesh'])}<div class="caret"><i></i></div></tool-row>
    <tool-row class="r2">${btns(['v1', 'v2', 'v3', 'v4', 'v5', 'v6', 'v7', 'table', [12, 1], 'solid*', 'wireOut', 'wireAll', '|', 'ghost', 'ghostBox', 4, 'pickFace*', 8, 'grayWire2', [18, 3], 'cubeV', 'cubeE', 'cubeF', 'cubeY*', 'grayX', 'grayX2', 'prism', 'prism2', [11, 1], 'camera'])}</tool-row>
    <div class="r3">
      <step-slider style="width:198px;--k:0px" ticks="1"></step-slider>
      <spin-box style="margin-left:10px">1</spin-box>
      <span class="lb" style="width:72px;margin-left:9px">/ 1 Steps</span>
      <tool-section w="14" l="0"></tool-section>
      <step-slider style="width:195px;--k:1px;--k2:4px" ticks="7"></step-slider>
      <spin-box style="margin-left:7px">1</spin-box>
      <span class="lb" style="margin-left:13px">/ 1 Cases</span>
    </div>
    <div class="r4">${btns(['first', 'prev', 'stop', 'play', 'last', 'gear'])}</div>
    <div class="main">
      <project-panel></project-panel>
      <model-view></model-view>
      <toolbox-panel></toolbox-panel>
    </div>
    <status-line></status-line>
  </div>`);

// ---------- SolidWorks side ----------
def('rib-btn', `:host{display:flex;flex:none;flex-direction:column;align-items:center;position:relative;font:12px/13.500px "Noto Sans CJK SC",sans-serif;color:#111;text-align:center;white-space:nowrap;box-sizing:border-box}
  :host([on]){background:#b3b6ba;border:2px solid #666;border-right-color:#888;border-bottom-color:#888}
  :host([dim]){color:#999}
  .l{margin-top:-1px}
  .lat{font:11px/14px ${UI}}
  .car{position:absolute;bottom:9px;border:3px solid transparent;border-top:4px solid #333;border-bottom:0}`,
  e => {
    const lines = e.at('t').split('|').map(s => `<div${/^[A-Za-z0-9]+$/.test(s) ? ' class="lat"' : ''}>${s}</div>`).join('');
    return `<x-icon name="${e.at('icon')}" size="${e.at('is', 17)}"></x-icon><div class="l">${lines}</div>${e.hasAttribute('car') ? '<i class="car"></i>' : ''}`;
  });
def('rib-sep', `:host{display:block;flex:none;width:1px;background:#555;margin:4px 0 4px}`, () => '');
def('hud-bar', `:host{display:flex;align-items:center;position:relative}
  .c{flex:none;border:3px solid transparent;border-top:3px solid #777;border-bottom:0}`,
  () => {
    // centre positions of the heads-up items
    const it = [[1319, 'hZoom'], [1342, 'hZoomA'], [1367, 'hPrev'], [1389, 'hSection'], [1412, 'hOrient'], [1434, 'hView'], [1453, 0], [1472, 'hDisplay'], [1490, 0], [1509, 'hGlasses'], [1527.5, 0], [1546, 'hBall'], [1568, 'hScene'], [1587.5, 0], [1606, 'hDisplay2'], [1624, 0]];
    let x = 1195, out = '';
    it.forEach(([c, n]) => {
      const w = n ? 15 : 6;
      const ml = c - w / 2 - x;
      out += n ? `<x-icon name="${n}" size="15" style="margin-left:${ml}px"></x-icon>` : `<i class="c" style="margin-left:${ml}px;width:0"></i>`;
      x = c + w / 2;
    });
    return out;
  });
def('sw-tab', `:host{display:flex;flex:none;box-sizing:border-box;height:21px;align-items:center;background:#b4b6ba;border:1px solid #444;border-top:0;border-left:0;font:11.400px "Open Sans","Noto Sans CJK SC",sans-serif;color:#111;white-space:nowrap;overflow:hidden}`, () => '<slot></slot>');

def('sw-canvas', `:host{display:block;flex:1;min-height:0;position:relative;overflow:hidden}
  svg{display:block}
  .mark{position:absolute;right:10px;bottom:8px;display:flex;align-items:baseline;color:#56595e;white-space:nowrap;filter:blur(.4px)}
  .s{font:700 22px/22px "Liberation Sans",sans-serif;display:inline-block;width:86px;transform-origin:left;transform:scaleX(1.300)}
  .s b{font-size:16px}
  .z{font:700 15px/22px "Noto Sans CJK SC",sans-serif;letter-spacing:6px;color:#66696e}
  .dot{position:absolute;left:22px;top:2px;width:5px;height:5px;border-radius:50%;background:#e05050}`,
  () => {
    const TH = 15 * Math.PI / 180;
    const ell = (cx, cy, X, Y) => {
      const rx = X * 1.006, ry = Y * .993;
      let d = '';
      for (let i = 0; i < 180; i++) {
        const a = i / 180 * 2 * Math.PI, u = rx * Math.cos(a), v = ry * Math.sin(a);
        d += (i ? 'L' : 'M') + (cx + u * Math.cos(TH) - v * Math.sin(TH)).toFixed(2) + ' ' + (cy + u * Math.sin(TH) + v * Math.cos(TH)).toFixed(2);
      }
      return d + 'Z';
    };
    const bg = '#c1c6d2', org = '#ff8a00', ink = '#222';
    const outer = ell(1310, 325, 212, 195), outerL = ell(1307, 339, 212, 195);
    const hole = ell(1308, 325, 185, 170), holeL = ell(1305, 338, 185, 170);
    const ring = ell(1310, 324, 121, 112), ringL = ell(1307, 337, 121, 112);
    const in1 = ell(1310, 324, 70.500, 65), in1L = ell(1307, 337, 70.500, 65);
    return `<svg width="676" height="541" viewBox="1020 111 676 541">
      <defs>
        <linearGradient id="wl"><stop offset="0" stop-color="#d8d8d8"/><stop offset=".18" stop-color="#b0b0b0"/><stop offset=".45" stop-color="#888"/><stop offset=".8" stop-color="#8e8496"/><stop offset="1" stop-color="#8e8496"/></linearGradient>
        <linearGradient id="wt"><stop offset="0" stop-color="#8e8496"/><stop offset=".5" stop-color="#8a8a8a"/><stop offset=".8" stop-color="#9a9a9a"/><stop offset="1" stop-color="#dcdcdc"/></linearGradient>
        <clipPath id="ch"><path d="${hole}"/></clipPath>
        <clipPath id="ci"><path d="${in1}"/></clipPath>
      </defs>
      <path d="${outerL}" fill="url(#wl)" stroke="${ink}"/>
      <path d="${outer}" fill="#fff" stroke="${ink}"/>
      <path d="${hole}" fill="url(#wt)"/>
      <path d="${holeL}" fill="${bg}" clip-path="url(#ch)"/>
      <path d="${holeL}" fill="none" stroke="${org}"/>
      <path d="${hole}" fill="none" stroke="${org}" stroke-width="1.300"/>
      <path d="M1333 165h7M1336.500 161.500v7" stroke="${org}"/>
      <path d="${ringL}" fill="url(#wl)" stroke="${ink}"/>
      <path d="${ring}" fill="#fff" stroke="${ink}"/>
      <path d="${in1}" fill="url(#wt)" stroke="${ink}"/>
      <path d="${in1L}" fill="${bg}" stroke="${ink}" clip-path="url(#ci)"/>
      <path d="${in1}" fill="none" stroke="${ink}"/>
    </svg>
    <div class="mark"><span class="s">simo<b>L</b></span><span class="z">西莫论坛</span><i class="dot"></i></div>`;
  });

def('sw-window', `:host{display:flex;flex:1;flex-direction:column;min-width:0;height:652px;background:#c1c6d2;border-left:2px solid #6e7680;box-sizing:border-box;overflow:hidden}
  .top{height:6px;flex:none;box-sizing:border-box;background:#d8dbe0;border-bottom:1px solid #444;display:flex}
  .top i{margin-left:71px;width:35px;height:3px;background:linear-gradient(90deg,#aaa 50%,#eee 50%)}
  .rib{display:flex;flex:none;height:75px;background:#d8dbe0;border-bottom:1px solid #333;box-sizing:border-box;padding-top:1px}
  .bar{display:flex;flex:none;height:30px}
  .tabs{display:flex;flex:none;align-items:flex-start}`,
  () => `
  <div class="top"><i></i></div>
  <div class="rib">
    <rib-btn style="width:44px;margin-left:-8px;padding-top:12.500px" icon="sHide" t="显示隐|藏的零|部件"></rib-btn>
    <rib-sep></rib-sep>
    <rib-btn style="width:48px;padding-top:6px" car icon="sFeature" t="装配体|特征"></rib-btn>
    <rib-btn style="width:46px;padding-top:6px" car icon="sRef" t="参考几|何体"></rib-btn>
    <rib-sep></rib-sep>
    <rib-btn style="width:48px;padding-top:12.500px" icon="sMotion" t="新建运|动算例"></rib-btn>
    <rib-sep></rib-sep>
    <rib-btn style="width:48px;padding-top:12.500px" icon="sBom" t="材料明|细表"></rib-btn>
    <rib-sep></rib-sep>
    <rib-btn style="width:48px;padding-top:12.500px" icon="sExplode" t="爆炸视|图"></rib-btn>
    <rib-btn style="width:47px;padding-top:12.500px" dim icon="sExplodeG" t="爆炸直|线草图"></rib-btn>
    <rib-sep></rib-sep>
    <rib-btn on style="width:61px;padding-top:9.500px;height:68px;margin:1px 0 0 1px" icon="s3d" t="Instant3D"></rib-btn>
    <rib-btn style="width:64px;padding-top:12.500px" icon="sUpdate" t="更新|Speedpak"></rib-btn>
    <rib-sep></rib-sep>
    <rib-btn style="width:48px;padding-top:12.500px" icon="sSnap" t="拍快照"></rib-btn>
  </div>
  <div class="bar">
    <div class="tabs"><sw-tab style="width:60px;justify-content:flex-end;padding-right:9px">WORKS 插件</sw-tab><sw-tab style="width:115px;justify-content:center">SOLIDWORKS MBD</sw-tab></div>
    <hud-bar></hud-bar>
  </div>
  <sw-canvas></sw-canvas>`);
</script>
</body>
</html>
